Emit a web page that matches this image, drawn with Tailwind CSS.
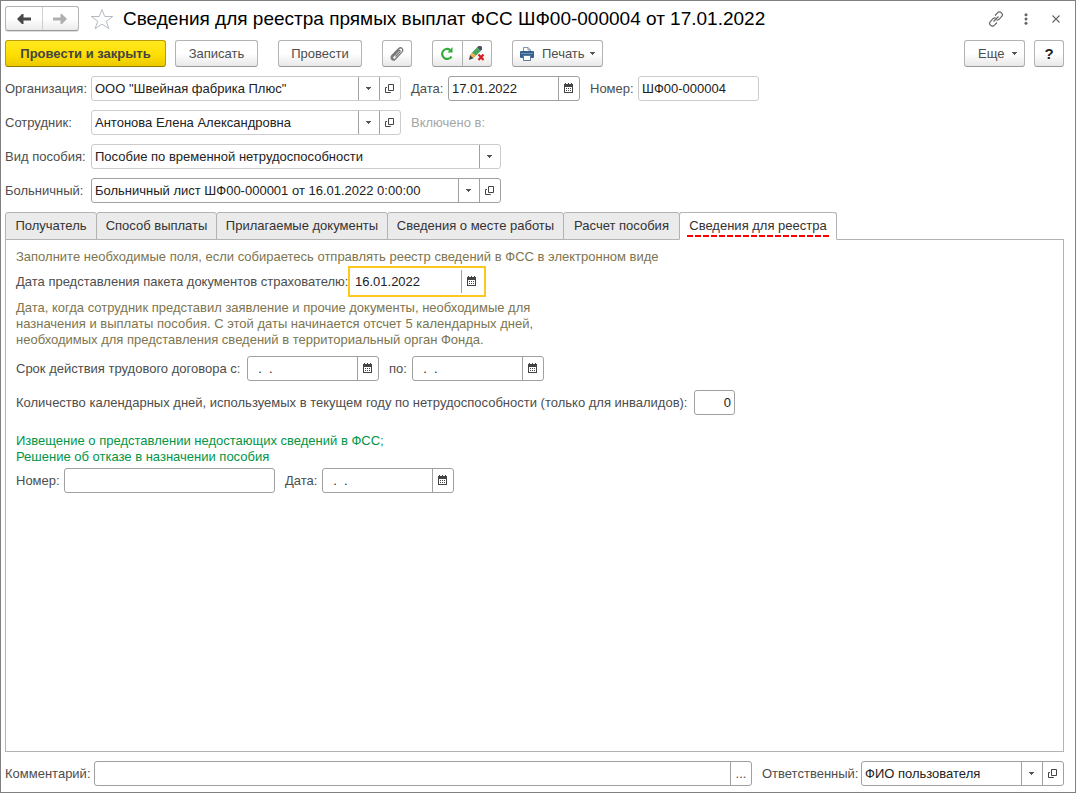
<!DOCTYPE html>
<html lang="ru">
<head>
<meta charset="utf-8">
<meta name="viewport" content="width=device-width, initial-scale=1">
<title>Сведения для реестра прямых выплат ФСС</title>
<script src="https://cdn.jsdelivr.net/npm/@tailwindcss/browser@4"></script>
</head>
<body class="font-['Liberation_Sans',Arial,sans-serif] text-[13px] leading-4 text-[#4d4d4d] bg-white">
<svg class="hidden" aria-hidden="true">
  <symbol id="caret" viewBox="0 0 6 4"><path d="M0 0h5v1H4v1H3v1H2V2H1V1H0z" fill="#555"/></symbol>
  <symbol id="open" viewBox="0 0 10 10"><path d="M3.500.500h5v6h-5zM2 3.500H.5v5h5V8" fill="none" stroke="#444"/></symbol>
  <symbol id="cal" viewBox="0 0 9 12"><path d="M1 0h1v1h2V0h1v1h2V0h1v1h1v9H0V1h1zM1 4v5h7V4z" fill="#444" fill-rule="evenodd"/><path d="M2 5h1v1H2zM4 5h1v1H4zM6 5h1v1H6zM2 7h1v1H2zM4 7h1v1H4zM6 7h1v1H6z" fill="#444"/></symbol>
</svg>
<div class="min-h-screen flex flex-col border border-[#808080] pl-1 pr-[11px] pb-[6px]">

  <header class="flex items-center h-[35px]">
    <div class="flex h-[25px] w-[74px] rounded-[3px] border border-[#b3b3b3] border-b-[#999] bg-linear-to-b from-white from-50% to-[#ebebeb] shadow-[0_1px_0_#ddd]">
      <button type="button" aria-label="Назад" class="flex-1 flex items-center justify-center border-r border-[#d0d0d0]">
        <svg width="14" height="10" viewBox="0 0 14 10"><path d="M5 0h1.500v3.500H14v3H6.500V10H5L0 5z" fill="#484848"/></svg>
      </button>
      <button type="button" aria-label="Вперед" class="flex-1 flex items-center justify-center">
        <svg width="14" height="10" viewBox="0 0 14 10"><path d="M9 0H7.500v3.500H0v3h7.500V10H9l5-5z" fill="#b0b0b0"/></svg>
      </button>
    </div>
    <button type="button" aria-label="В избранное" class="ml-[11px]">
      <svg width="24" height="22" viewBox="0 0 24 22"><path d="M12 1.500l2.700 7h8l-6.400 4.800 2.600 7.400-6.900-4.600-6.900 4.600 2.600-7.400L1.300 8.500h8z" fill="#fff" stroke="#b4bac4"/></svg>
    </button>
    <h1 class="ml-[9px] text-[19px] leading-6 text-black whitespace-nowrap">Сведения для реестра прямых выплат ФСС ШФ00-000004 от 17.01.2022</h1>
    <div class="ml-auto mr-px flex items-center">
      <button type="button" aria-label="Получить ссылку"><svg width="16" height="16" viewBox="0 0 16 16" fill="none" stroke="#666" stroke-width="1.200"><path d="M7 4.500l2.500-2.700c1.200-1.200 2.800-1.200 4 0s1.200 2.700 0 3.900L11 8.300c-.8.800-1.700 1-2.500.9M9 11.500l-2.500 2.700c-1.200 1.200-2.800 1.200-4 0s-1.200-2.700 0-3.900L5 7.700c.8-.8 1.700-1 2.500-.9M5.500 10.500l5-5"/></svg></button>
      <button type="button" aria-label="Меню" class="ml-5"><svg width="4" height="12" viewBox="0 0 4 12" fill="#666"><circle cx="2" cy="1.700" r="1.500"/><circle cx="2" cy="6" r="1.500"/><circle cx="2" cy="10.300" r="1.500"/></svg></button>
      <button type="button" aria-label="Закрыть" class="ml-6 mr-[3px]"><svg width="8" height="8" viewBox="0 0 8 8" stroke="#666" stroke-width="1.100"><path d="M.5.500l7 7M7.500.500l-7 7"/></svg></button>
    </div>
  </header>

  <div class="flex items-center mt-1 h-[27px]" role="toolbar" aria-label="Команды">
    <button type="button" class="h-[27px] w-[161px] rounded-[3px] border border-[#b89c00] border-b-[#8f7a00] bg-linear-to-b from-[#ffe91f] via-[#ffe000] to-[#eccb00] font-bold text-[#444] whitespace-nowrap">Провести и закрыть</button>
    <button type="button" class="ml-[9px] h-[27px] w-[83px] rounded-[3px] border border-[#b3b3b3] border-b-[#999] bg-linear-to-b from-white from-50% to-[#e8e8e8]">Записать</button>
    <button type="button" class="ml-5 h-[27px] w-[84px] rounded-[3px] border border-[#b3b3b3] border-b-[#999] bg-linear-to-b from-white from-50% to-[#e8e8e8]">Провести</button>
    <button type="button" aria-label="Присоединенные файлы" class="ml-5 h-[27px] w-[30px] flex items-center justify-center rounded-[3px] border border-[#b3b3b3] border-b-[#999] bg-linear-to-b from-white from-50% to-[#e8e8e8]">
      <svg width="14" height="14" viewBox="0 0 14 14" fill="none" stroke="#777" stroke-width="1.300"><path d="M5.500 9.500l4.300-4.600c1-1.200-.4-2.300-1.400-1.200L3.200 9.200c-1.700 2 .6 4.300 2.500 2.500l6-6.300C14.300 2.500 11.300-.7 8.500 1.800L2 8.500c-2.200 2.600.2 5.400 3 4.500"/></svg>
    </button>
    <div class="ml-5 flex h-[27px] w-[60px] rounded-[3px] border border-[#b3b3b3] border-b-[#999] bg-linear-to-b from-white from-50% to-[#e8e8e8]">
      <button type="button" aria-label="Обновить" class="flex-1 flex items-center justify-center border-r border-[#b3b3b3]">
        <svg width="14" height="13" viewBox="0 0 14 13"><path d="M11.500 9.500a5 5 0 1 1-1.500-6.700" fill="none" stroke="#2fab3a" stroke-width="2.200"/><path d="M12.500 0v5.500H7.500z" fill="#2fab3a"/></svg>
      </button>
      <button type="button" aria-label="Отменить изменения" class="flex-1 flex items-center justify-center">
        <svg width="16" height="15" viewBox="0 0 16 15"><path d="M8 1.500L9.500 0H12l1 1v2.500L11.500 5z" fill="#4a5068"/><path d="M8 1.500L11.700 5l-5 5L3 6.500z" fill="#45a85a"/><path d="M3 6.500L6.700 10 4.500 12.300 1 9z" fill="#efb04e"/><path d="M1 9l3.500 3.300L0 14z" fill="#444"/><path d="M9.500 8.500l5 5.500M14.500 8.500l-5 5.500" stroke="#d3201f" stroke-width="2.200"/></svg>
      </button>
    </div>
    <button type="button" class="ml-5 h-[27px] w-[91px] flex items-center pl-[7px] rounded-[3px] border border-[#b3b3b3] border-b-[#999] bg-linear-to-b from-white from-50% to-[#e8e8e8]">
      <svg width="14" height="14" viewBox="0 0 14 14"><path d="M3.500 5V.5H8L10.500 3v2" fill="#fff" stroke="#7d93ad"/><path d="M8 .5V3h2.500" fill="none" stroke="#7d93ad"/><rect y="4" width="14" height="7" rx="1" fill="#34618f"/><path d="M1 6.500h12" stroke="#6f94ba"/><path d="M3.500 8.500h7v5h-7z" fill="#fff" stroke="#5b7ca1"/></svg>
      <span class="ml-2">Печать</span>
      <svg class="ml-auto mr-[6px]" width="6" height="4"><use href="#caret"/></svg>
    </button>
    <button type="button" class="ml-auto h-[27px] w-[61px] flex items-center justify-between pl-[13px] pr-[6px] rounded-[3px] border border-[#b3b3b3] border-b-[#999] bg-linear-to-b from-white from-50% to-[#e8e8e8]">Еще<svg width="6" height="4"><use href="#caret"/></svg></button>
    <button type="button" aria-label="Справка" class="ml-[9px] h-[27px] w-[30px] rounded-[3px] border border-[#b3b3b3] border-b-[#999] bg-linear-to-b from-white from-50% to-[#e8e8e8] font-bold text-[15px] text-[#222]">?</button>
  </div>

  <form class="flex-1 flex flex-col mt-[9px]">
    <div class="flex flex-col gap-[9px]">
      <div class="flex items-center">
        <label for="org" class="w-[86px] whitespace-nowrap">Организация:</label>
        <div class="flex h-[25px] w-[310px] rounded-[3px] border border-[#ccc]">
          <input id="org" value="ООО &quot;Швейная фабрика Плюс&quot;" class="flex-1 min-w-0 pl-[3px] text-[#222] outline-none">
          <button type="button" aria-label="Выбрать организацию" class="w-[21px] flex items-center justify-center border-l border-[#a0a0a0]"><svg width="6" height="4"><use href="#caret"/></svg></button>
          <button type="button" aria-label="Открыть организацию" class="w-[21px] flex items-center justify-center border-l border-[#a0a0a0]"><svg width="10" height="10"><use href="#open"/></svg></button>
        </div>
        <label for="date" class="ml-[10px] w-[37px]">Дата:</label>
        <div class="flex h-[25px] w-[132px] rounded-[3px] border border-[#a0a0a0]">
          <input id="date" value="17.01.2022" class="flex-1 min-w-0 pl-[3px] text-[#222] outline-none">
          <button type="button" aria-label="Календарь" class="w-[21px] flex items-center pl-[5px] border-l border-[#a0a0a0]"><svg width="9" height="12"><use href="#cal"/></svg></button>
        </div>
        <label for="num" class="ml-[10px] w-[48px]">Номер:</label>
        <input id="num" value="ШФ00-000004" class="h-[25px] w-[121px] rounded-[3px] border border-[#ccc] pl-[3px] text-[#222] outline-none">
      </div>
      <div class="flex items-center">
        <label for="emp" class="w-[86px]">Сотрудник:</label>
        <div class="flex h-[25px] w-[310px] rounded-[3px] border border-[#ccc]">
          <input id="emp" value="Антонова Елена Александровна" class="flex-1 min-w-0 pl-[3px] text-[#222] outline-none">
          <button type="button" aria-label="Выбрать сотрудника" class="w-[21px] flex items-center justify-center border-l border-[#a0a0a0]"><svg width="6" height="4"><use href="#caret"/></svg></button>
          <button type="button" aria-label="Открыть сотрудника" class="w-[21px] flex items-center justify-center border-l border-[#a0a0a0]"><svg width="10" height="10"><use href="#open"/></svg></button>
        </div>
        <span class="ml-[10px] text-[#a6a6a6]">Включено в:</span>
      </div>
      <div class="flex items-center">
        <label for="kind" class="w-[86px] whitespace-nowrap">Вид пособия:</label>
        <div class="flex h-[25px] w-[410px] rounded-[3px] border border-[#ccc]">
          <select id="kind" class="appearance-none flex-1 min-w-0 pl-[3px] text-[#222] outline-none"><option>Пособие по временной нетрудоспособности</option></select>
          <span class="w-[21px] flex items-center justify-center border-l border-[#a0a0a0]"><svg width="6" height="4"><use href="#caret"/></svg></span>
        </div>
      </div>
      <div class="flex items-center">
        <label for="sick" class="w-[86px]">Больничный:</label>
        <div class="flex h-[25px] w-[410px] rounded-[3px] border border-[#a0a0a0]">
          <input id="sick" value="Больничный лист ШФ00-000001 от 16.01.2022 0:00:00" class="flex-1 min-w-0 pl-[3px] text-[#222] outline-none">
          <button type="button" aria-label="Выбрать больничный" class="w-[21px] flex items-center justify-center border-l border-[#a0a0a0]"><svg width="6" height="4"><use href="#caret"/></svg></button>
          <button type="button" aria-label="Открыть больничный" class="w-[21px] flex items-center justify-center border-l border-[#a0a0a0]"><svg width="10" height="10"><use href="#open"/></svg></button>
        </div>
      </div>
    </div>

    <div role="tablist" class="flex mt-[9px] h-7 -mb-px relative text-[#333] whitespace-nowrap">
      <button type="button" role="tab" class="w-[92px] rounded-t-[3px] border border-[#b3b3b3] bg-[#ebebeb]">Получатель</button>
      <button type="button" role="tab" class="w-[121px] -ml-px rounded-t-[3px] border border-[#b3b3b3] bg-[#ebebeb]">Способ выплаты</button>
      <button type="button" role="tab" class="w-[172px] -ml-px rounded-t-[3px] border border-[#b3b3b3] bg-[#ebebeb]">Прилагаемые документы</button>
      <button type="button" role="tab" class="w-[177px] -ml-px rounded-t-[3px] border border-[#b3b3b3] bg-[#ebebeb]">Сведения о месте работы</button>
      <button type="button" role="tab" class="w-[117px] -ml-px rounded-t-[3px] border border-[#b3b3b3] bg-[#ebebeb]">Расчет пособия</button>
      <button type="button" role="tab" aria-selected="true" class="w-[158px] -ml-px flex flex-col items-center pt-[5px] rounded-t-[3px] border border-b-white border-[#b3b3b3] bg-white"><span>Сведения для реестра</span>
        <svg class="mt-px" width="142" height="2"><path d="M0 1h142" stroke="#f00" stroke-width="2" stroke-dasharray="6 2"/></svg>
      </button>
    </div>

    <section class="flex-1 border border-[#b3b3b3] pl-[10px] pt-[9px]">
      <p class="text-[#7d7550]">Заполните необходимые поля, если собираетесь отправлять реестр сведений в ФСС в электронном виде</p>
      <div class="flex items-center mt-px">
        <label for="docs" class="w-[332px] whitespace-nowrap">Дата представления пакета документов страхователю:</label>
        <div class="flex h-[31px] w-[138px] border-2 border-[#fac81e] py-[2px]">
          <input id="docs" value="16.01.2022" class="flex-1 min-w-0 pl-[5px] text-[#222] outline-none">
          <button type="button" aria-label="Календарь" class="w-[23px] flex items-center pl-[5px] border-l border-[#a0a0a0]"><svg width="9" height="12"><use href="#cal"/></svg></button>
        </div>
      </div>
      <p class="mt-[3px] text-[#7d7550]">Дата, когда сотрудник представил заявление и прочие документы, необходимые для<br>назначения и выплаты пособия. С этой даты начинается отсчет 5 календарных дней,<br>необходимых для представления сведений в территориальный орган Фонда.</p>
      <div class="flex items-center mt-2">
        <label for="from" class="w-[231px] whitespace-nowrap">Срок действия трудового договора с:</label>
        <div class="flex h-[25px] w-[132px] rounded-[3px] border border-[#a0a0a0]">
          <input id="from" value="  .  ." class="flex-1 min-w-0 pl-[3px] text-[#222] outline-none">
          <button type="button" aria-label="Календарь" class="w-[21px] flex items-center pl-[5px] border-l border-[#a0a0a0]"><svg width="9" height="12"><use href="#cal"/></svg></button>
        </div>
        <label for="to" class="ml-[10px] w-[23px]">по:</label>
        <div class="flex h-[25px] w-[132px] rounded-[3px] border border-[#a0a0a0]">
          <input id="to" value="  .  ." class="flex-1 min-w-0 pl-[3px] text-[#222] outline-none">
          <button type="button" aria-label="Календарь" class="w-[21px] flex items-center pl-[5px] border-l border-[#a0a0a0]"><svg width="9" height="12"><use href="#cal"/></svg></button>
        </div>
      </div>
      <div class="flex items-center mt-[9px]">
        <label for="days" class="w-[678px] whitespace-nowrap">Количество календарных дней, используемых в текущем году по нетрудоспособности (только для инвалидов):</label>
        <input id="days" value="0" class="h-[25px] w-[41px] rounded-[3px] border border-[#a0a0a0] pr-[3px] text-right text-[#222] outline-none">
      </div>
      <p class="mt-[18px] text-[#009646]">Извещение о представлении недостающих сведений в ФСС;<br>Решение об отказе в назначении пособия</p>
      <div class="flex items-center mt-[3px]">
        <label for="nnum" class="w-[48px]">Номер:</label>
        <input id="nnum" class="h-[25px] w-[211px] rounded-[3px] border border-[#a0a0a0] px-[3px] text-[#222] outline-none">
        <label for="ndate" class="ml-[10px] w-[37px]">Дата:</label>
        <div class="flex h-[25px] w-[132px] rounded-[3px] border border-[#a0a0a0]">
          <input id="ndate" value="  .  ." class="flex-1 min-w-0 pl-[3px] text-[#222] outline-none">
          <button type="button" aria-label="Календарь" class="w-[21px] flex items-center pl-[5px] border-l border-[#a0a0a0]"><svg width="9" height="12"><use href="#cal"/></svg></button>
        </div>
      </div>
    </section>

    <footer class="flex items-center mt-[9px]">
      <label for="comment" class="w-[89px] whitespace-nowrap">Комментарий:</label>
      <div class="flex flex-1 h-[25px] rounded-[3px] border border-[#a0a0a0]">
        <input id="comment" class="flex-1 min-w-0 px-[3px] text-[#222] outline-none">
        <button type="button" aria-label="Редактировать комментарий" class="w-[21px] border-l border-[#a0a0a0]">...</button>
      </div>
      <label for="resp" class="ml-[10px] w-[99px] whitespace-nowrap">Ответственный:</label>
      <div class="flex h-[25px] w-[203px] rounded-[3px] border border-[#a0a0a0]">
        <input id="resp" value="ФИО пользователя" class="flex-1 min-w-0 pl-[3px] text-[#222] outline-none">
        <button type="button" aria-label="Выбрать ответственного" class="w-[21px] flex items-center justify-center border-l border-[#a0a0a0]"><svg width="6" height="4"><use href="#caret"/></svg></button>
        <button type="button" aria-label="Открыть ответственного" class="w-[21px] flex items-center justify-center border-l border-[#a0a0a0]"><svg width="10" height="10"><use href="#open"/></svg></button>
      </div>
    </footer>
  </form>
</div>
</body>
</html>
